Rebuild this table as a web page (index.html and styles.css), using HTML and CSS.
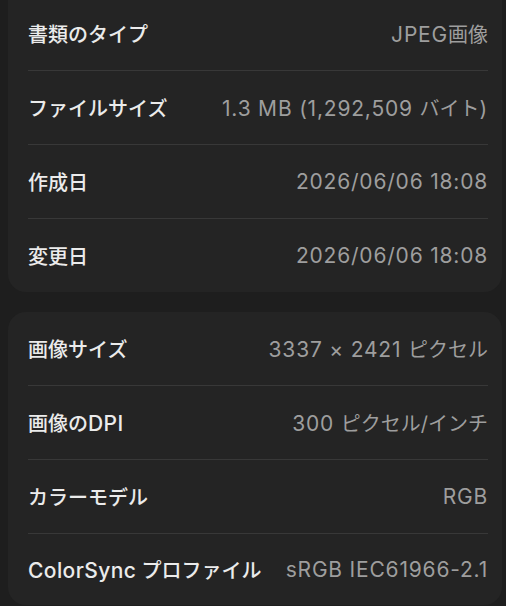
FILE: index.html
```html
<!DOCTYPE html>
<html lang="ja">
<head>
    <meta charset="UTF-8">
    <meta name="viewport" content="width=device-width, initial-scale=1.0">
    <title>情報</title>
    <link rel="stylesheet" href="styles.css">
</head>
<body>
    <div class="panel">
        <div class="card card-top">
            <div class="row">
                <span class="label">書類のタイプ</span>
                <span class="value">JPEG<span class="ja">画像</span></span>
            </div>
            <div class="row">
                <span class="label">ファイルサイズ</span>
                <span class="value">1.3 MB (1,292,509 <span class="ja">バイト</span>)</span>
            </div>
            <div class="row">
                <span class="label">作成日</span>
                <span class="value">2026/06/06 18:08</span>
            </div>
            <div class="row">
                <span class="label">変更日</span>
                <span class="value">2026/06/06 18:08</span>
            </div>
        </div>

        <div class="card card-bottom">
            <div class="row">
                <span class="label">画像サイズ</span>
                <span class="value">3337 × 2421 <span class="ja">ピクセル</span></span>
            </div>
            <div class="row">
                <span class="label">画像の<span class="lat">DPI</span></span>
                <span class="value">300 <span class="ja">ピクセル/インチ</span></span>
            </div>
            <div class="row">
                <span class="label">カラーモデル</span>
                <span class="value">RGB</span>
            </div>
            <div class="row">
                <span class="label"><span class="lat">ColorSync</span> プロファイル</span>
                <span class="value">sRGB IEC61966-2.1</span>
            </div>
        </div>
    </div>
</body>
</html>
```

FILE: styles.css
```css
html, body {
    margin: 0;
    padding: 0;
    height: 100%;
    overflow: hidden;
    background-color: #1e1e1e;
}
body {
    font-family: Inter, "Noto Sans CJK JP", sans-serif;
    font-size: 20px;
    color: #e6e6e6;
}
.panel {
    display: flex;
    flex-direction: column;
    gap: 20px;
    margin: -3px 4px 0 8px;
}
.card {
    background: #242424;
    border-radius: 18px;
    padding: 0 14px 0 20px;
}
.card-top {
    border-top-left-radius: 0;
    border-top-right-radius: 0;
}
.card-bottom .row:last-child {
    height: 71px;
}
.row {
    display: flex;
    justify-content: space-between;
    align-items: center;
    height: 73px;
    border-bottom: 1px solid #383838;
}
.row:last-child {
    border-bottom: none;
}
.label {
    font-weight: 500;
    color: #ebebeb;
}
.label .lat {
    font-size: 21px;
    letter-spacing: 0.4px;
}
.value {
    font-size: 21px;
    letter-spacing: 0.8px;
    color: #9e9e9e;
}
.value .ja {
    font-size: 20px;
    letter-spacing: 0;
}
```
